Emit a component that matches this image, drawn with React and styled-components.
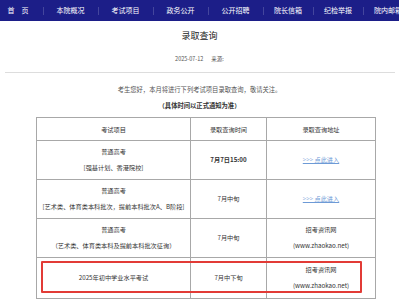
import React from "react"
import styled, { createGlobalStyle } from "styled-components"

const GlobalStyle = createGlobalStyle`
  html, body {
    margin: 0;
    padding: 0;
    background: #ffffff;
    font-family: "Noto Sans CJK SC", "Noto Sans", sans-serif;
    color: #333333;
  }
`

const Page = styled.div`
  width: 399px;
  height: 300px;
  overflow: hidden;
  background: #ffffff;
`

const NavBar = styled.div`
  height: 21px;
  background: #1c1e88;
  display: grid;
  grid-template-columns: 43px 55px 55px 55px 55px 50px 50px 50px;
  align-items: center;
`

const NavItem = styled.div`
  position: relative;
  text-align: center;
  color: #ffffff;
  font-size: 7px;
  line-height: 21px;
  letter-spacing: ${(p) => (p.$wide ? "7px" : "0")};
  white-space: nowrap;
  &::before {
    content: "";
    display: ${(p) => (p.$first ? "none" : "block")};
    position: absolute;
    left: 0;
    top: 7px;
    height: 8px;
    width: 1px;
    background: rgba(255, 255, 255, 0.18);
  }
`

const Title = styled.h1`
  margin: 8px 0 0;
  text-align: center;
  font-size: 9px;
  line-height: 14px;
  font-weight: normal;
  color: #222222;
`

const Meta = styled.div`
  margin-top: 11px;
  text-align: center;
  font-size: 5.5px;
  line-height: 10px;
  color: #555555;
  span + span {
    margin-left: 8px;
  }
`

const Rule = styled.div`
  margin: 8px 4px 0 5px;
  height: 1px;
  background: #dddddd;
`

const Intro = styled.p`
  margin: 12px 0 0;
  text-align: center;
  font-family: "Liberation Serif", "Noto Sans CJK SC", serif;
  font-size: 6.3px;
  line-height: 10px;
  color: #555555;
`

const Note = styled(Intro)`
  margin-top: 6px;
  font-weight: bold;
  color: #333333;
`

const TableWrap = styled.div`
  position: relative;
  margin: 6px 0 0 36px;
  width: 339px;
`

const Table = styled.table`
  border-collapse: collapse;
  width: 339px;
  table-layout: fixed;
  font-size: 6.2px;
  color: #333333;
  td, th {
    border: 1px solid #a8a8a8;
    text-align: center;
    vertical-align: middle;
    padding: 0;
    font-weight: normal;
  }
`

const Row = styled.tr`
  height: ${(p) => p.$h}px;
`

const Line = styled.div`
  line-height: 16px;
  white-space: nowrap;
  font-weight: ${(p) => (p.$bold ? "bold" : "normal")};
`

const LinkText = styled.span`
  color: #6d9ad6;
  text-decoration: underline;
`

const Highlight = styled.div`
  position: absolute;
  left: 5px;
  top: 144px;
  width: 321px;
  height: 32px;
  border: 2px solid #e23b36;
  box-sizing: border-box;
  border-radius: 1px;
  pointer-events: none;
`

const navItems = ["首页", "本院概况", "考试项目", "政务公开", "公开招聘", "院长信箱", "纪检举报", "院内邮箱"]

const rows = [
  {
    h: 39,
    item: ["普通高考", "[强基计划、香港院校]"],
    time: "7月7日15:00",
    bold: true,
    link: true,
  },
  {
    h: 39,
    item: ["普通高考", "[艺术类、体育类本科批次，提前本科批次A、B阶段]"],
    time: "7月中旬",
    link: true,
  },
  {
    h: 39,
    item: ["普通高考", "（艺术类、体育类本科及提前本科批次征询）"],
    time: "7月中旬",
    site: true,
  },
  {
    h: 41,
    item: ["2025年初中学业水平考试"],
    time: "7月中下旬",
    site: true,
  },
]

export default function App() {
  return (
    <Page>
      <GlobalStyle />
      <NavBar>
        {navItems.map((n, i) => (
          <NavItem key={n} $first={i === 0} $wide={i === 0}>
            {n}
          </NavItem>
        ))}
      </NavBar>

      <Title>录取查询</Title>
      <Meta>
        <span>2025-07-12</span>
        <span>来源:</span>
      </Meta>
      <Rule />

      <Intro>考生您好，本月将进行下列考试项目录取查询，敬请关注。</Intro>
      <Note>（具体时间以正式通知为准）</Note>

      <TableWrap>
        <Table>
          <colgroup>
            <col style={{ width: 154 }} />
            <col style={{ width: 76 }} />
            <col style={{ width: 109 }} />
          </colgroup>
          <tbody>
            <Row $h={23}>
              <th>考试项目</th>
              <th>录取查询时间</th>
              <th>录取查询地址</th>
            </Row>
            {rows.map((r, i) => (
              <Row key={i} $h={r.h}>
                <td>
                  {r.item.map((t) => (
                    <Line key={t}>{t}</Line>
                  ))}
                </td>
                <td>
                  <Line $bold={r.bold}>{r.time}</Line>
                </td>
                <td>
                  {r.link && (
                    <Line>
                      <LinkText>&gt;&gt;&gt; 点此进入</LinkText>
                    </Line>
                  )}
                  {r.site && (
                    <>
                      <Line>招考资讯网</Line>
                      <Line>(www.zhaokao.net)</Line>
                    </>
                  )}
                </td>
              </Row>
            ))}
          </tbody>
        </Table>
        <Highlight />
      </TableWrap>
    </Page>
  )
}
